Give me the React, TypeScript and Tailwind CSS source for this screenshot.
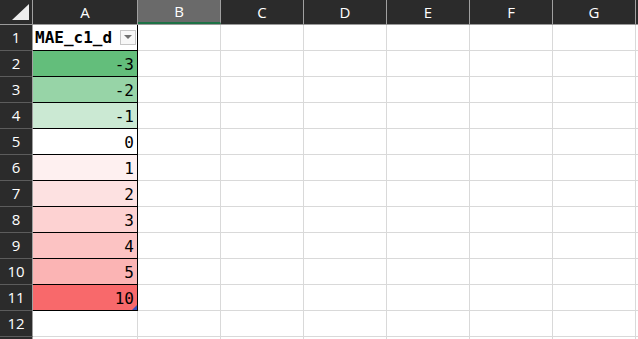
import React from 'react';

// Conditional-format colours for column A (Excel 3-colour scale)
const rows: { value: string; bg: string }[] = [
    { value: '-3', bg: 'bg-[#63be7b]' },
    { value: '-2', bg: 'bg-[#97d4a7]' },
    { value: '-1', bg: 'bg-[#cbe9d3]' },
    { value: '0', bg: 'bg-white' },
    { value: '1', bg: 'bg-[#fef0f0]' },
    { value: '2', bg: 'bg-[#fde1e1]' },
    { value: '3', bg: 'bg-[#fdd2d2]' },
    { value: '4', bg: 'bg-[#fcc3c3]' },
    { value: '5', bg: 'bg-[#fbb4b4]' },
    { value: '10', bg: 'bg-[#f8696b]' },
];

const otherCols = ['B', 'C', 'D', 'E', 'F', 'G'];

const uiFont = { fontFamily: '"Open Sans", "Noto Sans", sans-serif' };
const monoFont = { fontFamily: '"DejaVu Sans Mono", "Liberation Mono", monospace' };

const RowHeader = ({ n }: { n?: number }) => (
    <div
        className="w-[33px] h-[26px] shrink-0 bg-[#2b2b2b] border-r border-b border-r-[#a0a0a0] border-b-[#5c5c5c] flex items-center justify-center text-white text-[15px]"
        style={uiFont}
    >
        {n}
    </div>
);

const EmptyCells = () => (
    <>
        {otherCols.map(c => (
            <div key={c} className="w-[83px] h-[26px] shrink-0 border-r border-b border-[#d9d9d9] bg-white" />
        ))}
        <div className="flex-1 h-[26px] border-b border-[#d9d9d9] bg-white" />
    </>
);

export default function App() {
    return (
        <div className="w-[638px] h-[339px] overflow-hidden bg-white select-none">
            {/* ---------- column headers ---------- */}
            <div className="flex h-[25px] bg-[#2b2b2b] border-b border-[#9a9a9a]">
                <div className="w-[33px] h-full shrink-0 border-r border-[#a0a0a0] flex items-start">
                    <svg width="32" height="24" viewBox="0 0 32 24">
                        <polygon points="12,20 29,20 29,4" fill="#eeeeee" />
                    </svg>
                </div>
                <div className="w-[105px] shrink-0 border-r border-[#a0a0a0] flex items-center justify-center text-white text-[15px]" style={uiFont}>
                    A
                </div>
                {otherCols.map(c => (
                    <div
                        key={c}
                        className={`w-[83px] shrink-0 border-r border-[#a0a0a0] flex items-center justify-center text-white text-[15px] ${c === 'B' ? 'bg-[#6a6a6a] border-b-2 border-b-[#1e7145]' : ''}`}
                        style={uiFont}
                    >
                        {c}
                    </div>
                ))}
                <div className="flex-1" />
            </div>

            {/* ---------- row 1: table header ---------- */}
            <div className="flex">
                <RowHeader n={1} />
                <div className="w-[105px] h-[26px] shrink-0 border-r border-b border-black bg-white flex items-center pl-[2px] pr-[1px]">
                    <span className="font-bold text-[16px] text-black leading-none" style={monoFont}>MAE_c1_d</span>
                    <span className="ml-auto w-[16px] h-[15px] border border-[#c6c6c6] bg-[#f7f7f7] flex items-center justify-center">
                        <svg width="8" height="5" viewBox="0 0 8 5">
                            <polygon points="0,0 8,0 4,4" fill="#707070" />
                        </svg>
                    </span>
                </div>
                <EmptyCells />
            </div>

            {/* ---------- data rows ---------- */}
            {rows.map((r, i) => (
                <div key={i} className="flex">
                    <RowHeader n={i + 2} />
                    <div className={`relative w-[105px] h-[26px] shrink-0 border-r border-b border-black ${r.bg} flex items-center justify-end pr-[3px] pt-[2px]`}>
                        <span className="text-[16px] text-black leading-none" style={monoFont}>{r.value}</span>
                        {i === rows.length - 1 && (
                            <span className="absolute right-0 bottom-0 w-0 h-0 border-l-[5px] border-l-transparent border-b-[5px] border-b-[#3b4fb8]" />
                        )}
                    </div>
                    <EmptyCells />
                </div>
            ))}

            {/* ---------- row 12 and the edge of row 13 ---------- */}
            {[12, undefined].map((n, i) => (
                <div key={i} className="flex">
                    <RowHeader n={n} />
                    <div className="w-[105px] h-[26px] shrink-0 border-r border-b border-[#d9d9d9] bg-white" />
                    <EmptyCells />
                </div>
            ))}
        </div>
    );
}
